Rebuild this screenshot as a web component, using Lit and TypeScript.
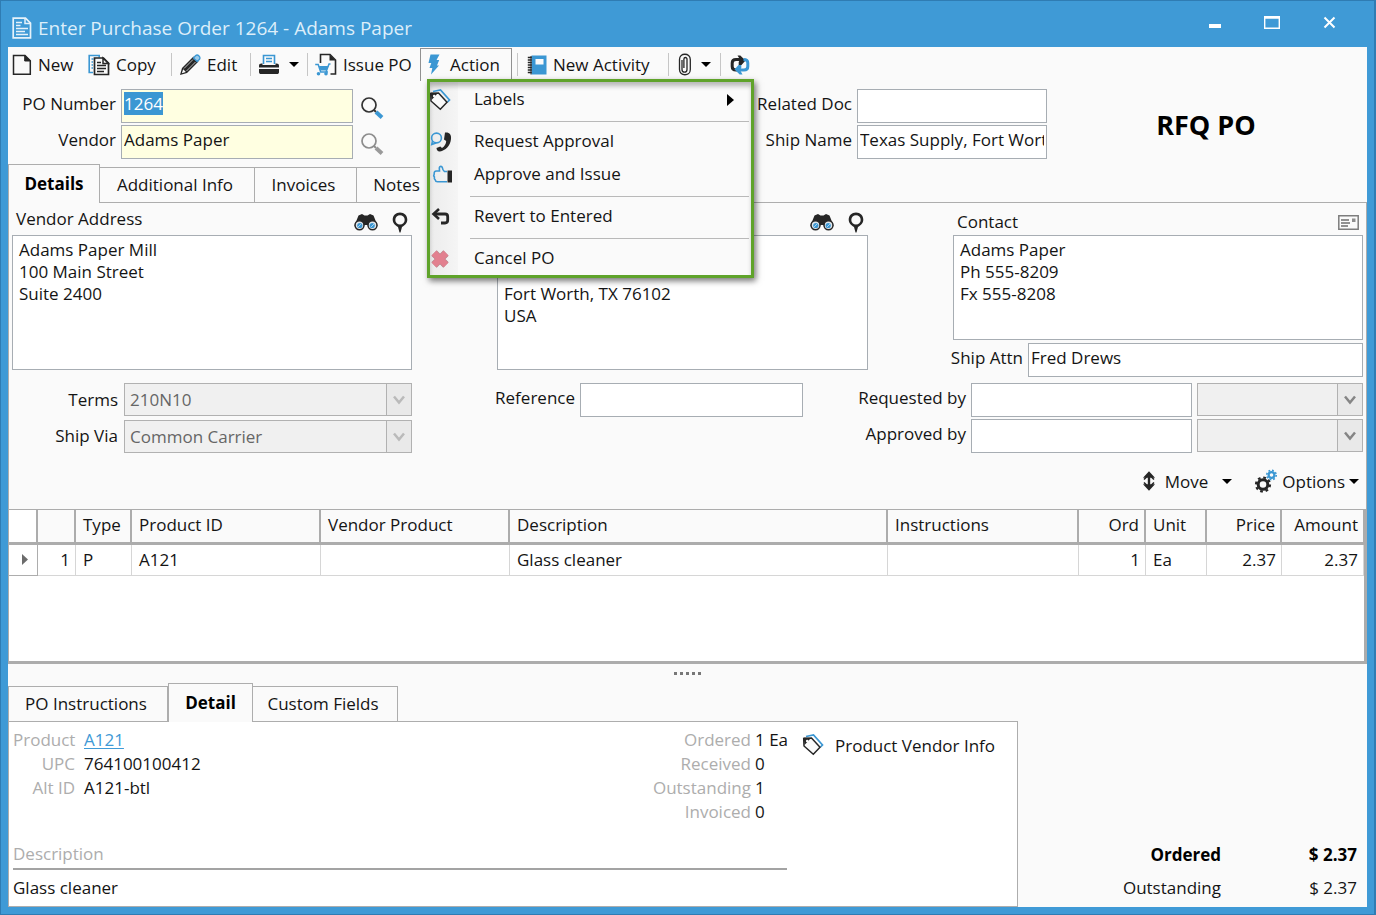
import { LitElement, html, css, svg, nothing } from "lit";
import { customElement, query } from "lit/decorators.js";

const INK = "#262626";
const BLUE = "#3b97d3";

const icon = (w: number, h: number, body: unknown) =>
  html`<svg class="icon" width=${w} height=${h} viewBox="0 0 ${w} ${h}" fill="none" aria-hidden="true">${body}</svg>`;

const icons = {
  title: icon(20, 22, svg`
    <path d="M1.2 1.2h12.3l5 5v14.6H1.2z" stroke="#e6f2fa" stroke-width="1.7"/>
    <path d="M13 1.5v5h5.500M4 5.500h6M4 8.500h4.500M4 11.500h12M4 14.500h9M4 17.500h12" stroke="#e6f2fa" stroke-width="1.500"/>`),
  page: icon(20, 22, svg`
    <path d="M1.500 1.500h11.500l5.300 5.300v13.500H1.500z" stroke=${INK} stroke-width="1.500"/>
    <path d="M12.700 1.500v5.500h5.600z" fill=${INK} stroke=${INK} stroke-width="1"/>`),
  copy: icon(22, 22, svg`
    <path d="M5 18.500H1.200V1.500h10v2M3.500 5h2M3.500 8h1.500M3.500 11h1.500M3.500 14h1.500" stroke=${BLUE} stroke-width="1.600"/>
    <path d="M6.500 4h9l5 5v11.500h-14z" fill="#fafafa" stroke=${INK} stroke-width="1.700"/>
    <path d="M15 4v5.500h5.500zM9 8.500h4M9 11.500h9M9 14.500h9M9 17.500h7" stroke=${INK} stroke-width="1.500"/>`),
  pencil: icon(22, 22, svg`
    <path d="M1 21l2-7L14.500 2.500l5 5L8 19z" fill=${INK}/>
    <path d="M5 14.500L14 5.500M7.500 17l9-9" stroke="#bbb" stroke-width="1"/>
    <path d="M2.800 19.200l1.400-4 2.700 2.700z" fill="#fafafa"/>
    <path d="M14.500 4l2-2.200c1.200-1.100 2.500-.8 3.500.2s1.300 2.300.3 3.500l-2.200 2z" fill="#9ccbe9" stroke=${BLUE} stroke-width="1.300"/>`),
  printer: icon(22, 21, svg`
    <path d="M5.500 10V1.500h11V10M8 4.500h6M8 7.500h6" stroke=${BLUE} stroke-width="1.600"/>
    <path d="M3.500 9.500h1V11h13V9.500h1c1.500 0 2.500.8 2.500 2.300v1.700H1v-1.700c0-1.500 1-2.300 2.500-2.300z" fill=${INK}/>
    <path d="M1 15h20v3c0 1.500-.8 2-2 2H3c-1.200 0-2-.5-2-2z" fill=${INK}/>`),
  issue: icon(22, 23, svg`<g transform="translate(-1 0)">
    <path d="M6.500 10V1.500h9.500l5.500 5.500v14h-5" stroke=${INK} stroke-width="1.600"/>
    <path d="M15.500 1.500v6h6z" fill=${INK}/>
    <path d="M1.200 11.500h3l2.500 7.500H14M16.500 11h-1.500l-3 8" stroke=${BLUE} stroke-width="1.500"/>
    <path d="M5 13h9.500l-1.800 4.500H6.500z" fill=${BLUE}/>
    <circle cx="4.500" cy="20.700" r="1.800" fill=${BLUE}/><circle cx="12" cy="20.700" r="1.800" fill=${BLUE}/></g>`),
  bolt: icon(14, 21, svg`<path d="M3.500.5h9L9.500 6h2.700l-2.200 5.500h2L4 20.500l1.300-6.500H2.500L4.300 9H1.500z" fill=${BLUE}/>`),
  notebook: icon(22, 20, svg`<g transform="translate(2 0)">
    <path d="M4.500.5h15v19h-15z" fill=${BLUE}/><path d="M8.500 4h8v5.500h-8z" fill="#fafafa"/>
    <path d="M.8 2.500h4M.8 5h4M.8 7.500h4M.8 10h4M.8 12.500h4M.8 15h4M.8 17.500h4" stroke=${INK} stroke-width="1.300"/>
    <path d="M4 1v18.500" stroke=${INK} stroke-width="1"/></g>`),
  clip: icon(16, 23, svg`<path transform="translate(2 0)" d="M4 7v9.500c0 3.600 5 3.600 5 0V6c0-2-3-2-3.100 0v9M1.500 16.500V6.500c0-7 10.800-7 10.800 0v10c0 7-10.800 7-10.800 0z" stroke=${INK} stroke-width="1.300"/>`),
  refresh: icon(22, 20, svg`<g transform="translate(2 0)">
    <path d="M7 15H6c-2.500 0-3.800-1-3.800-3.500V8C2.200 5.500 3.500 4.500 6 4.500h4" stroke=${INK} stroke-width="3"/>
    <path d="M7.500.5h2.800l5.200 5-4 4.500H8.700V7l1.300-2.500z" fill=${INK}/>
    <path d="M13.500 4.500c3 0 4.300 1 4.300 3.500v3.500c0 2.500-1.300 3.500-3.800 3.500h-4" stroke=${BLUE} stroke-width="3"/>
    <path d="M12.500 19.500H9.700L4.500 14.500l4-4.500h2.800v3L10 15z" fill=${BLUE}/></g>`),
  caret: icon(10, 5, svg`<path d="M0 0h10L5 5z" fill="#000"/>`),
  search: icon(24, 24, svg`
    <circle cx="9" cy="9" r="7" stroke="#333" stroke-width="1.700"/>
    <path d="M14 14l2 2" stroke="#333" stroke-width="2"/><path d="M16 16l6 5.500" stroke=${BLUE} stroke-width="4"/>`),
  searchOff: icon(24, 24, svg`
    <circle cx="9" cy="9" r="7" stroke="#8d8d8d" stroke-width="1.700"/>
    <path d="M14 14l2 2" stroke="#8d8d8d" stroke-width="2"/><path d="M16 16l6 5.500" stroke="#9a9a9a" stroke-width="4"/>`),
  binoculars: icon(24, 18, svg`
    <path d="M4.500 2.500L8 1l2.500 1.500h3L16 1l3.500 1.500 4 10-6 4-4-4.500h-3l-4 4.500-6-4z" fill=${INK}/>
    <circle cx="5.500" cy="12.300" r="4.500" fill="#dfe5ea" stroke=${INK} stroke-width="1.500"/><circle cx="18.500" cy="12.300" r="4.500" fill="#dfe5ea" stroke=${INK} stroke-width="1.500"/>
    <circle cx="5.800" cy="12.500" r="2.600" fill=${BLUE}/><circle cx="18.200" cy="12.500" r="2.600" fill=${BLUE}/>
    <path d="M4 14l3-3M17 14l3-3" stroke="#a9d2ec" stroke-width="1"/>`),
  pin: icon(16, 21, svg`
    <path fill-rule="evenodd" d="M8 .5c4.200 0 7.300 3.100 7.300 7.200 0 3.600-3 5.800-5.300 7.300L8.500 20.500h-1L6 15C3.700 13.500.7 11.300.7 7.700.7 3.600 3.800.5 8 .5zM8 3.200a4.700 4.700 0 1 0 0 9.400 4.700 4.700 0 0 0 0-9.400z" fill=${INK}/>`),
  card: icon(21, 15, svg`
    <path d="M.8.8h19.400v13.400H.8z" stroke="#7d7d7d" stroke-width="1.500"/>
    <path d="M3 5h8M3 8h9M3 11h7" stroke="#6d6d6d" stroke-width="1.400"/><path d="M14 3.500h3.500v3.500H14z" fill="#8d8d8d"/>`),
  move: icon(14, 20, svg`
    <path d="M7 .3L13 6.800H1zM7 19.700L1 13.200h12z" fill=${INK}/><path d="M7 4v12" stroke=${INK} stroke-width="2.400"/>
    <path d="M4.500 6L2 8.500M9.500 6L12 8.500M4.500 14L2 11.500M9.500 14l2.500-2.500" stroke=${INK} stroke-width="1.600"/>`),
  gears: icon(24, 24, svg`
    <circle cx="9" cy="15.500" r="4.800" stroke=${INK} stroke-width="3"/>
    <circle cx="9" cy="15.500" r="7" stroke=${INK} stroke-width="2.200" stroke-dasharray="2.750 2.750"/>
    <circle cx="17.500" cy="6" r="2.900" stroke=${BLUE} stroke-width="2.200"/>
    <circle cx="17.500" cy="6" r="4.700" stroke=${BLUE} stroke-width="1.600" stroke-dasharray="1.840 1.840"/>`),
  tag: icon(22, 22, svg`
    <path d="M4 2.500L11.500 1l9 10-2 2" stroke=${BLUE} stroke-width="1.700"/>
    <path d="M1.700 4.500L9.500 4l8.500 9.300-6.700 7L2 12z" fill="#fafafa" stroke=${INK} stroke-width="1.500"/>
    <path d="M1.700 3.500L9 4l-6.500 7z" fill=${INK}/><circle cx="5.200" cy="7" r="1.300" fill="#fafafa"/>`),
  phone: icon(23, 20, svg`<g transform="translate(1 0)">
    <circle cx="6.500" cy="6" r="4.900" stroke=${BLUE} stroke-width="1.600"/><path d="M2.500 9l-.8 3.500L6 11" stroke=${BLUE} stroke-width="1.500"/>
    <path d="M15 .5c4.500-.5 6.500 2 6 6.500C20.300 14 15.500 18.500 10 19.500c-2 .3-3.500-1.500-3.500-3.500l3.800-1.500 1.700 1.500c2.500-1.500 4-4 4.200-7L14 7.500z" fill=${INK}/></g>`),
  thumb: icon(24, 19, svg`<g transform="translate(4 0)">
    <path d="M14 6.500h-2.500C10 5.500 9.500 4 9.300 2.500 8.800.8 6.500 1 6.300 2.800L6.500 6H3.500C1.500 6 1 7.500 1.200 9c-.6 1-.5 2.200.2 3-.3 1.200 0 2.200.8 2.800.2 1.200 1 1.900 2.300 1.900H14" stroke=${BLUE} stroke-width="1.600"/>
    <path d="M14.500 5.500H19v12h-4.500z" fill=${INK}/></g>`),
  revert: icon(21, 17, svg`<g transform="translate(2 0)">
    <path d="M3 6h11c1.700 0 2.700 1 2.700 2.700V12.300c0 1.700-1 2.700-2.700 2.700H10" stroke=${INK} stroke-width="2.800"/>
    <path d="M8 1L2.500 6 8 11" stroke=${INK} stroke-width="2.600"/></g>`),
  cross: icon(21, 20, svg`<g transform="translate(1 0)"><path d="M4 4l12 12M16 4L4 16" stroke="#b9838b" stroke-width="7.600"/><path d="M4 4l12 12M16 4L4 16" stroke="#e2808f" stroke-width="6.400"/></g>`),
  submenu: icon(7, 12, svg`<path d="M0 0l7 6-7 6z" fill="#000"/>`),
  row: icon(6, 11, svg`<path d="M0 0l6 5.500L0 11z" fill="#6c6c6c"/>`),
  chevron: icon(12, 10, svg`<path d="M1 1.500l5 6 5-6" stroke="currentColor" stroke-width="2.500"/>`),
  min: icon(12, 4, svg`<path d="M0 0h12v4H0z" fill="#fff"/>`),
  max: icon(16, 13, svg`<path d="M.7.700h14.600v11.600H.700zM1 2h14" stroke="#fff" stroke-width="1.400"/>`),
  close: icon(13, 13, svg`<path d="M1.500 1.500l10 10M11.500 1.500l-10 10" stroke="#fff" stroke-width="2"/>`),
};

const columns = [
  { name: "", w: 29 }, { name: "", w: 38, num: true }, { name: "Type", w: 56 }, { name: "Product ID", w: 189 },
  { name: "Vendor Product", w: 189 }, { name: "Description", w: 0 }, { name: "Instructions", w: 191 },
  { name: "Ord", w: 67, num: true }, { name: "Unit", w: 61 }, { name: "Price", w: 75, num: true }, { name: "Amount", w: 82, num: true },
];

const lines = [["1", "P", "A121", "", "Glass cleaner", "", "1", "Ea", "2.37", "2.37"]];

@customElement("app-root")
export class AppRoot extends LitElement {
  static styles = css`
    :host {
      display: flex;
      flex-direction: column;
      box-sizing: border-box;
      min-height: 100vh;
      padding: 0 7px 7px;
      border: solid #2f7cb3;
      border-width: 1px 2px 1px 1px;
      background: #3f9ad6;
      color: #141414;
      font: 17px/23px "Open Sans", "Noto Sans", sans-serif;
    }
    *, *::before { box-sizing: border-box; }
    button, input, select, textarea { font: inherit; color: inherit; margin: 0; border-radius: 0; outline: none; }
    button { display: flex; align-items: center; background: none; border: 0; padding: 0; white-space: nowrap; }
    .icon { display: block; flex: none; }

    .titlebar { display: flex; align-items: center; height: 46px; padding: 8px 24px 0 4px; gap: 6px; color: #dceefa; }
    .titlebar h1 { flex: 1; margin: 0; font-size: 19px; font-weight: 400; }
    .window-buttons { display: flex; gap: 43px; align-items: center; padding-right: 7px; margin-bottom: 12px; }
    .window-buttons .low { padding-top: 8px; }

    .body { flex: 1; display: flex; flex-direction: column; background: #fafafa; }

    .toolbar { display: grid; grid-template-columns: 76px 83px 79px 57px 113px 97px 151px 52px 40px; padding: 1px 0 0 4px; height: 34px; }
    .tool { display: flex; align-items: center; }
    .tool > button { gap: 6px; }
    .tool > .drop { gap: 9px; }
    .split::before { content: ""; width: 1px; height: 23px; background: #c6c6c6; margin-right: 7px; }
    .tool.action { position: relative; align-items: stretch; }
    .action > button { gap: 9px; width: 92px; padding: 0 0 2px 6px; border: 1px solid #919191; border-bottom: 0; }

    .menu {
      position: absolute; z-index: 2; left: 7px; top: 31px; width: 327px; margin: 0; padding: 1px 0 0;
      list-style: none; border: 3px solid #5fa32a;
      background: linear-gradient(90deg, #ececec, #f5f5f5 28px, #fafafa 28px);
      box-shadow: 2px 3px 6px #0008, inset 0 5px 5px -1px #0004;
    }
    .menu button { width: 100%; height: 33px; padding-right: 17px; }
    .menu .glyph { display: flex; width: 44px; overflow: hidden; flex: none; }
    .menu .glyph .icon { margin-left: -1px; }
    .menu .name { flex: 1; text-align: left; padding-bottom: 2px; }
    .menu .rule { height: 9px; padding: 5px 2px 0 40px; }
    .menu .rule::before { content: ""; display: block; height: 1px; background: #b9b9b9; }

    .header { display: grid; grid-template-columns: 108px 232px 36px 1fr 190px 314px; column-gap: 5px; row-gap: 2px; padding: 8px 1px 5px 0; }
    .label { text-align: right; white-space: nowrap; align-self: center; padding-bottom: 6px; }
    .field { width: 100%; height: 34px; border: 1px solid #a7adb3; background: #fff; padding: 0 2px 5px; }
    .field.required { background: #ffffe1; }
    .field::selection { background: #3b97d3; color: #fff; }
    .lookup { padding: 3px 0 0 2px; }
    .kind { grid-column: 6; grid-row: 1 / 3; place-self: center; padding: 2px 6px 0 0; font-size: 27px; line-height: 32px; font-weight: 700; color: #000; }

    .tabs { display: flex; height: 39px; }
    .tabs button { justify-content: center; margin-top: 3px; padding: 0 4px 2px 0; border: solid #adadad; border-width: 1px 1px 1px 0; }
    .tabs button.on { margin-top: 0; padding: 0 0 2px; border-width: 1px 1px 0; font-weight: 700; color: #000; }
    .tabs button.start { border-left-width: 1px; }
    .tabs button.open { border-right: 0; padding: 0 0 2px 16px; }
    .tabs .rest { flex: 1; border-bottom: 1px solid #adadad; }
    .tabs .after-gap { margin-left: 8px; }
    .w-details { width: 92px; }
    .w-info { width: 155px; }
    .w-invoices { width: 102px; }
    .w-notes { width: 63px; }
    .w-po { width: 160px; }
    .w-detail { width: 85px; }
    .w-custom { width: 145px; }

    .panel { border: solid #adadad; border-width: 0 1px; padding: 0 3px; }
    .cards { display: grid; grid-template-columns: 400fr 371fr 410fr; column-gap: 85px; }
    .card-head { display: flex; align-items: center; justify-content: flex-end; gap: 14px; height: 32px; padding: 0 4px; }
    .card-head label { flex: 1; padding-bottom: 2px; }
    .card-head .low { padding-top: 6px; }
    .memo { display: block; width: 100%; height: 135px; resize: none; overflow: hidden; border: 1px solid #a7adb3; background: #fff; padding: 3px 6px; line-height: 22px; }
    .memo.short { height: 105px; margin-bottom: 3px; }
    .attn { display: grid; grid-template-columns: 70px 1fr; gap: 5px; }
    .attn .label { justify-self: end; }
    .terms { display: grid; grid-template-columns: 112px 288fr 168px 223fr 168px 221fr 171fr; row-gap: 2px; padding-top: 6px; }
    .terms .label { padding-right: 5px; }
    .terms .even { padding: 0 6px 2px 0; }
    .combo { display: grid; height: 33px; border: 1px solid #b1b1b1; background: #f0f0f0; color: #666; }
    .combo select { grid-area: 1 / 1; width: 100%; appearance: none; border: 0; background: none; padding: 0 5px; opacity: 1; }
    .combo .arrow { grid-area: 1 / 1; justify-self: end; display: grid; place-items: center; width: 25px; border-left: 1px solid #b1b1b1; pointer-events: none; background: #e9e9e9; color: #bababa; }
    .combo.ready { margin-left: 5px; }
    .combo.ready .arrow { color: #858585; }
    .combo.end { align-self: end; }
    .grid-tools { display: flex; justify-content: flex-end; align-items: center; height: 56px; gap: 22px; padding-right: 4px; }
    .grid-tools button { gap: 4px; }
    .grid-tools .move { gap: 9px; }
    .grid-tools .move .caret { margin-left: 5px; }

    .lines { flex: 1; min-height: 120px; background: #fff; border: solid #acacac; border-width: 1px 3px 3px 1px; }
    table { width: 100%; table-layout: fixed; border-spacing: 0; }
    th { height: 35px; padding: 0 5px 3px 7px; font-weight: 400; text-align: left; background: #fafafa; border: solid #acacac; border-width: 0 2px 3px 0; }
    td { height: 31px; padding: 0 5px 2px 7px; border: solid #d6d6d6; border-width: 0 1px 1px 0; }
    th:first-child { background: #fff; }
    td:first-child { border-color: #adadad; padding-left: 13px; }
    th:last-child { border-right-width: 1px; }
    th.num, td.num { text-align: right; }

    .splitter { display: flex; justify-content: center; align-items: center; gap: 3px; height: 19px; }
    .splitter i { width: 3px; height: 3px; background: #777; }

    .bottom { display: grid; grid-template-columns: minmax(0, 1010fr) minmax(0, 349fr); }
    .detail { display: grid; grid-template-columns: 62px 1fr 110px 30px 230px; background: #fff; border: solid #adadad; border-width: 0 1px 1px; height: 185px; padding: 6px 0 7px 4px; }
    .sheet { margin: 0; display: grid; grid-auto-rows: 24px; column-gap: 5px; align-content: start; }
    .sheet dt, .desc-label { color: #adadad; text-align: right; }
    .sheet dd { margin: 0; white-space: nowrap; }
    .product { grid-column: 1 / 3; grid-template-columns: 62px 1fr; column-gap: 9px; }
    .amounts { grid-column: 3 / 5; grid-template-columns: 104px 32px; column-gap: 4px; }
    .sheet a { color: #3f9ad6; text-underline-offset: 2px; }
    .vendor-info { align-self: start; height: 24px; gap: 11px; margin: 5px 0 0 15px; }
    .desc { grid-column: 1 / 5; align-self: end; }
    .desc-label { text-align: left; padding-bottom: 3px; border-bottom: 2px solid #a3a3a3; }
    .desc p { margin: 0; padding-top: 6px; }
    .totals { margin: 0; display: grid; grid-template-columns: 1fr 136px; align-content: end; row-gap: 10px; padding: 0 10px 8px 0; text-align: right; }
    .totals dd { margin: 0; }
    .totals .strong { font-weight: 700; color: #000; }
  `;

  @query("#po-number") private poNumber!: HTMLInputElement;

  firstUpdated() {
    this.poNumber.focus();
    this.poNumber.select();
  }

  private combo(id: string, value: string, cls: string, label?: string) {
    return html`<div class="combo ${cls}">
      <select id=${id} disabled aria-label=${label ?? nothing}><option>${value}</option></select>
      <span class="arrow">${icons.chevron}</span>
    </div>`;
  }

  private menuItem(glyph: unknown, name: string, more: unknown = nothing) {
    return html`<li role="none"><button role="menuitem"><span class="glyph">${glyph}</span><span class="name">${name}</span>${more}</button></li>`;
  }

  render() {
    const rule = html`<li class="rule" role="separator"></li>`;
    return html`
      <header class="titlebar">
        ${icons.title}
        <h1>Enter Purchase Order 1264 - Adams Paper</h1>
        <div class="window-buttons">
          <button class="low" aria-label="Minimize">${icons.min}</button>
          <button aria-label="Maximize">${icons.max}</button>
          <button aria-label="Close">${icons.close}</button>
        </div>
      </header>
      <main class="body">
        <nav class="toolbar">
          <div class="tool"><button>${icons.page}New</button></div>
          <div class="tool"><button>${icons.copy}Copy</button></div>
          <div class="tool split"><button>${icons.pencil}Edit</button></div>
          <div class="tool split"><button class="drop" aria-label="Print">${icons.printer}${icons.caret}</button></div>
          <div class="tool split"><button>${icons.issue}Issue PO</button></div>
          <div class="tool action">
            <button aria-haspopup="menu" aria-expanded="true">${icons.bolt}Action</button>
            <ul class="menu" role="menu">
              ${this.menuItem(icons.tag, "Labels", icons.submenu)}
              ${rule}
              ${this.menuItem(icons.phone, "Request Approval")}
              ${this.menuItem(icons.thumb, "Approve and Issue")}
              ${rule}
              ${this.menuItem(icons.revert, "Revert to Entered")}
              ${rule}
              ${this.menuItem(icons.cross, "Cancel PO")}
            </ul>
          </div>
          <div class="tool split"><button>${icons.notebook}New Activity</button></div>
          <div class="tool split"><button class="drop" aria-label="Attachments">${icons.clip}${icons.caret}</button></div>
          <div class="tool split"><button aria-label="Refresh">${icons.refresh}</button></div>
        </nav>

        <section class="header">
          <label class="label" for="po-number">PO Number</label>
          <input id="po-number" class="field required" .value=${"1264"}>
          <button class="lookup" aria-label="Find purchase order">${icons.search}</button>
          <label class="label" for="related">Related Doc</label>
          <input id="related" class="field">
          <div class="kind">RFQ PO</div>
          <label class="label" for="vendor">Vendor</label>
          <input id="vendor" class="field required" .value=${"Adams Paper"}>
          <button class="lookup" aria-label="Find vendor">${icons.searchOff}</button>
          <label class="label" for="ship-name">Ship Name</label>
          <input id="ship-name" class="field" .value=${"Texas Supply, Fort Worth"}>
        </section>

        <div class="tabs" role="tablist">
          <button role="tab" class="w-details on" aria-selected="true">Details</button>
          <button role="tab" class="w-info">Additional Info</button>
          <button role="tab" class="w-invoices">Invoices</button>
          <button role="tab" class="w-notes open">Notes</button>
          <div class="rest after-gap"></div>
        </div>

        <section class="panel">
          <div class="cards">
            <div>
              <div class="card-head">
                <label for="vendor-address">Vendor Address</label>
                <button class="low" aria-label="Find vendor address">${icons.binoculars}</button>
                <button class="low" aria-label="Map vendor address">${icons.pin}</button>
              </div>
              <textarea id="vendor-address" class="memo" .value=${"Adams Paper Mill\n100 Main Street\nSuite 2400"}></textarea>
            </div>
            <div>
              <div class="card-head">
                <button class="low" aria-label="Find shipping address">${icons.binoculars}</button>
                <button class="low" aria-label="Map shipping address">${icons.pin}</button>
              </div>
              <textarea class="memo" aria-label="Shipping address" .value=${"Texas Supply\n2020 North Main Street\nFort Worth, TX 76102\nUSA"}></textarea>
            </div>
            <div>
              <div class="card-head">
                <label class="low" for="contact">Contact</label>
                <button class="low" aria-label="Contact card">${icons.card}</button>
              </div>
              <textarea id="contact" class="memo short" .value=${"Adams Paper\nPh 555-8209\nFx 555-8208"}></textarea>
              <div class="attn">
                <label class="label" for="attn">Ship Attn</label>
                <input id="attn" class="field" .value=${"Fred Drews"}>
              </div>
            </div>
          </div>

          <div class="terms">
            <label class="label even" for="terms">Terms</label>
            ${this.combo("terms", "210N10", "")}
            <label class="label" for="reference">Reference</label>
            <input id="reference" class="field">
            <label class="label" for="requested">Requested by</label>
            <input id="requested" class="field">
            ${this.combo("requested-role", "", "ready", "Requested by role")}
            <label class="label even" for="ship-via">Ship Via</label>
            ${this.combo("ship-via", "Common Carrier", "end")}
            <span></span><span></span>
            <label class="label" for="approved">Approved by</label>
            <input id="approved" class="field">
            ${this.combo("approved-role", "", "ready", "Approved by role")}
          </div>

          <div class="grid-tools">
            <button class="move">${icons.move}Move<span class="caret">${icons.caret}</span></button>
            <button>${icons.gears}Options${icons.caret}</button>
          </div>
        </section>

        <div class="lines">
          <table>
            <colgroup>${columns.map((c) => html`<col style=${c.w ? `width:${c.w}px` : nothing}>`)}</colgroup>
            <thead><tr>${columns.map((c) => html`<th class=${c.num ? "num" : ""}>${c.name}</th>`)}</tr></thead>
            <tbody>
              ${lines.map((l) => html`<tr><td>${icons.row}</td>${l.map((v, i) => html`<td class=${columns[i + 1].num ? "num" : ""}>${v}</td>`)}</tr>`)}
            </tbody>
          </table>
        </div>

        <div class="splitter"><i></i><i></i><i></i><i></i><i></i></div>

        <section class="bottom">
          <div>
            <div class="tabs" role="tablist">
              <button role="tab" class="w-po start">PO Instructions</button>
              <button role="tab" class="w-detail on" aria-selected="true">Detail</button>
              <button role="tab" class="w-custom">Custom Fields</button>
              <div class="rest"></div>
            </div>
            <div class="detail">
              <dl class="sheet product">
                <dt>Product</dt><dd><a href="#A121">A121</a></dd>
                <dt>UPC</dt><dd>764100100412</dd>
                <dt>Alt ID</dt><dd>A121-btl</dd>
              </dl>
              <dl class="sheet amounts">
                <dt>Ordered</dt><dd>1 Ea</dd>
                <dt>Received</dt><dd>0</dd>
                <dt>Outstanding</dt><dd>1</dd>
                <dt>Invoiced</dt><dd>0</dd>
              </dl>
              <button class="vendor-info">${icons.tag}Product Vendor Info</button>
              <div class="desc">
                <div class="desc-label">Description</div>
                <p>Glass cleaner</p>
              </div>
            </div>
          </div>
          <dl class="totals">
            <dt class="strong">Ordered</dt><dd class="strong">$ 2.37</dd>
            <dt>Outstanding</dt><dd>$ 2.37</dd>
          </dl>
        </section>
      </main>
    `;
  }
}
